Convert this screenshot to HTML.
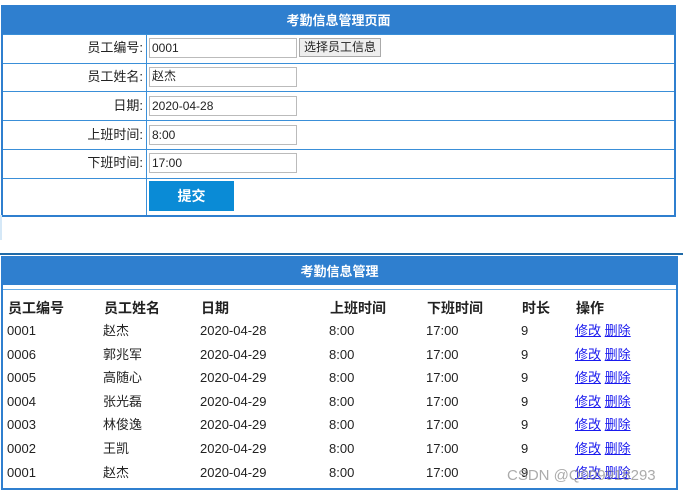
<!DOCTYPE html>
<html><head><meta charset="utf-8"><style>
body{margin:0;width:683px;height:495px;background:#fff;font-family:"Liberation Sans","Noto Sans CJK SC",sans-serif;font-size:13px;color:#222;position:relative;overflow:hidden}
.a{position:absolute}
.t1{left:1px;top:5px;width:671px;height:208px;border:2px solid #2f7fcf}
.hd{background:#2f7fcf;color:#fff;font-weight:bold;text-align:center;font-size:13px}
.hl{position:absolute;left:0;width:671px;height:1px;background:#3a8fd8}
.vl{position:absolute;left:143px;top:28px;width:1px;height:180px;background:#3a8fd8}
.lb{position:absolute;width:140px;text-align:right;font-size:13px;line-height:16px}
.in{position:absolute;left:146px;border:1px solid #bbb;font-size:12px;line-height:18px;padding-left:2px;box-sizing:border-box;width:148px;height:20px}
.t2{left:1px;top:256px;width:673px;height:230px;border:2px solid #2f7fcf}
.c{position:absolute;font-size:13px;line-height:16px}
a{color:#1a1aee;text-decoration:underline}
</style></head><body>
<div class="a t1">
 <div class="hd" style="height:27px;line-height:27px">考勤信息管理页面</div>
 <div class="hl" style="top:27px"></div>
 <div class="hl" style="top:56px"></div>
 <div class="hl" style="top:84px"></div>
 <div class="hl" style="top:113px"></div>
 <div class="hl" style="top:142px"></div>
 <div class="hl" style="top:171px"></div>
 <div class="vl"></div>
 <div class="lb" style="top:33px;left:0">员工编号:</div>
 <div class="lb" style="top:62px;left:0">员工姓名:</div>
 <div class="lb" style="top:91px;left:0">日期:</div>
 <div class="lb" style="top:120px;left:0">上班时间:</div>
 <div class="lb" style="top:148px;left:0">下班时间:</div>
 <div class="in" style="top:31px">0001</div>
 <div class="a" style="left:296px;top:31px;width:82px;height:19px;border:1px solid #aaa;background:#eee;font-size:12px;line-height:17px;text-align:center;box-sizing:border-box">选择员工信息</div>
 <div class="in" style="top:60px;line-height:16px">赵杰</div>
 <div class="in" style="top:89px">2020-04-28</div>
 <div class="in" style="top:118px">8:00</div>
 <div class="in" style="top:146px">17:00</div>
 <div class="a" style="left:146px;top:174px;width:85px;height:30px;background:#0a8bd6;color:#fff;font-weight:bold;font-size:14px;line-height:30px;text-align:center">提交</div>
</div>
<div class="a" style="left:0;top:215px;width:2px;height:25px;background:#d5e8f7"></div>
<div class="a" style="left:0;top:253px;width:683px;height:2px;background:#1f6aa8"></div>
<div class="a t2">
 <div class="hd" style="height:27px;line-height:27px">考勤信息管理</div>
 <div class="hl" style="top:31px;width:673px;background:#6aaee6"></div>
 <div class="c" style="left:5px;top:42px;font-weight:bold;font-size:14px">员工编号</div>
 <div class="c" style="left:101px;top:42px;font-weight:bold;font-size:14px">员工姓名</div>
 <div class="c" style="left:198px;top:42px;font-weight:bold;font-size:14px">日期</div>
 <div class="c" style="left:327px;top:42px;font-weight:bold;font-size:14px">上班时间</div>
 <div class="c" style="left:424px;top:42px;font-weight:bold;font-size:14px">下班时间</div>
 <div class="c" style="left:519px;top:42px;font-weight:bold;font-size:14px">时长</div>
 <div class="c" style="left:573px;top:42px;font-weight:bold;font-size:14px">操作</div>
</div>
<div id="rows"></div>
<div class="a" style="left:507px;top:467px;font-size:15px;color:rgba(150,150,150,.8)">CSDN @Q009918293</div>
<script>
var d=[["0001","赵杰","2020-04-28"],["0006","郭兆军","2020-04-29"],["0005","高随心","2020-04-29"],["0004","张光磊","2020-04-29"],["0003","林俊逸","2020-04-29"],["0002","王凯","2020-04-29"],["0001","赵杰","2020-04-29"]];
var h="";d.forEach(function(r,i){var y=323+i*23.6;var s='style="top:'+y+'px;left:';
h+='<div class="c" '+s+'7px">'+r[0]+'</div><div class="c" '+s+'103px">'+r[1]+'</div><div class="c" '+s+'200px">'+r[2]+'</div><div class="c" '+s+'329px">8:00</div><div class="c" '+s+'426px">17:00</div><div class="c" '+s+'521px">9</div><div class="c" '+s+'575px"><a>修改</a> <a>删除</a></div>';});
document.getElementById("rows").innerHTML=h;
</script>
</body></html>
